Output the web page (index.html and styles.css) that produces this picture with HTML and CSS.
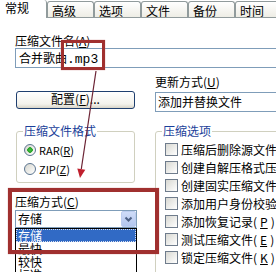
FILE: index.html
```html
<html>
<head>
    <meta charset="UTF-8">
    <meta name="viewport" content="width=device-width, initial-scale=1.0">
    <title>压缩文件名和参数</title>
    <link rel="stylesheet" href="styles.css">
</head>
<body>

<div class="screen">
    <div class="tabs">
        <div class="tab active">常规</div>
        <div class="tab">高级</div>
        <div class="tab">选项</div>
        <div class="tab">文件</div>
        <div class="tab">备份</div>
        <div class="tab">时间</div>
    </div>

    <div class="page">
        <div class="caption">压缩文件名(<u>A</u>)</div>
        <div class="textbox">合并歌曲<span class="ext">.mp3</span></div>

        <div class="columns">
            <div class="col">
                <button class="btn">配置(<u>F</u>)...</button>

                <fieldset class="group group-format">
                    <legend>压缩文件格式</legend>
                    <div class="radio-row"><span class="radio checked"></span><span class="latin">RAR(<u>R</u>)</span></div>
                    <div class="radio-row"><span class="radio"></span><span class="latin">ZIP(<u>Z</u>)</span></div>
                </fieldset>

                <div class="caption method">压缩方式(<u>C</u>)</div>
                <div class="combo">
                    <span>存储</span>
                    <span class="combo-btn">
                        <svg width="13" height="14" viewBox="0 0 13 14"><path d="M3.5 5.5 L6.5 8.5 L9.5 5.5" fill="none" stroke="#4d6185" stroke-width="2"/></svg>
                    </span>
                </div>
                <ul class="list">
                    <li class="sel">存储</li>
                    <li>最快</li>
                    <li>较快</li>
                    <li>标准</li>
                </ul>
            </div>

            <div class="col">
                <div class="caption update">更新方式(<u>U</u>)</div>
                <div class="combo wide">添加并替换文件</div>

                <fieldset class="group group-options">
                    <legend>压缩选项</legend>
                    <div class="check-row"><span class="check"></span>压缩后删除源文件</div>
                    <div class="check-row"><span class="check"></span>创建自解压格式压缩文件(<u>X</u>)</div>
                    <div class="check-row"><span class="check"></span>创建固实压缩文件(<u>S</u>)</div>
                    <div class="check-row"><span class="check"></span>添加用户身份校验信息(<u>T</u>)</div>
                    <div class="check-row"><span class="check"></span>添加恢复记录(<u>P</u>)</div>
                    <div class="check-row"><span class="check"></span>测试压缩文件(<u>E</u>)</div>
                    <div class="check-row"><span class="check"></span>锁定压缩文件(<u>K</u>)</div>
                </fieldset>
            </div>
        </div>
    </div>

    <!-- red marks drawn over the dialog -->
    <div class="mark mark-name"></div>
    <div class="mark mark-method"></div>
    <svg class="arrow" width="276" height="272" viewBox="0 0 276 272">
        <line x1="96" y1="71" x2="81.3" y2="169" stroke="#6b2233" stroke-width="1.2"/>
        <polygon points="80,178 85.3,169.7 77.3,168.5" fill="#c0202e"/>
    </svg>
</div>

</body>
</html>
```

FILE: styles.css
```css
* {
    margin: 0;
    padding: 0;
    box-sizing: border-box;
}
html, body {
    overflow: hidden;
}
body {
    width: 276px;
    height: 272px;
    background: #fff;
    font-family: "Noto Sans CJK SC", "Liberation Sans", sans-serif;
    font-size: 12px;
    color: #000;
}
.screen {
    position: relative;
    width: 340px;
    height: 272px;
}
.tabs {
    display: flex;
    align-items: flex-end;
    height: 18px;
    border-bottom: 1px solid #919b9c;
}
.tab {
    width: 47px;
    height: 16px;
    border: 1px solid #919b9c;
    border-bottom: 0;
    border-radius: 3px 3px 0 0;
    background: linear-gradient(#fff, #eeede5);
    padding: 3px 0 0 4px;
    line-height: 12px;
}
.tab.active {
    height: 18px;
    margin-bottom: -1px;
    border: 0;
    border-right: 1px solid #919b9c;
    background: #fff;
    padding: 1px 0 0 5px;
    line-height: 14px;
}
.page {
    padding: 16px 0 0 15px;
}
.caption {
    line-height: 14px;
    white-space: nowrap;
}
.textbox {
    height: 20px;
    border: 1px solid #7f9db9;
    padding-left: 3px;
    line-height: 17px;
    white-space: nowrap;
}
.ext {
    font-family: "Liberation Mono", monospace;
    font-size: 13px;
}
.columns {
    display: grid;
    grid-template-columns: 122px 1fr;
    column-gap: 18px;
}
.btn {
    display: block;
    width: 119px;
    height: 18px;
    margin: 23px 0 0 1px;
    border: 1px solid #1f3f6f;
    border-radius: 3px;
    background: linear-gradient(#fff, #f3f2ec 75%, #d8d4c8);
    font: inherit;
    line-height: 14px;
    padding-bottom: 2px;
}
.group {
    border: 1px solid #d0d0bf;
    border-radius: 3px;
    padding: 2px 0 4px 6px;
    min-width: 0;
}
.group legend {
    padding: 0 1px;
    line-height: 14px;
    color: #1b3f9a;
}
.group-format {
    margin: 15px 2px 0 1px;
}
.group-options {
    margin-top: 12px;
    padding-bottom: 8px;
}
.radio-row {
    display: flex;
    align-items: center;
    gap: 3px;
    height: 19px;
    padding-left: 1px;
}
.latin {
    font-size: 11px;
}
.radio {
    width: 12px;
    height: 12px;
    border-radius: 50%;
    border: 1px solid #5c7590;
    background: linear-gradient(135deg, #d6d6ce, #fff);
}
.radio.checked {
    background: radial-gradient(circle, #4bc04b 0, #21a121 2.5px, transparent 3px), linear-gradient(135deg, #d6d6ce, #fff);
}
.check-row {
    display: flex;
    align-items: center;
    gap: 3px;
    height: 18px;
    padding-left: 3px;
    white-space: nowrap;
}
.check {
    flex: none;
    width: 13px;
    height: 13px;
    border: 1px solid #6f7c8c;
    background: linear-gradient(135deg, #d8d8d2, #fff);
}
.method {
    margin-top: 12px;
}
.update {
    margin-top: 7px;
}
.combo {
    display: flex;
    justify-content: space-between;
    height: 18px;
    margin-top: 1px;
    border: 1px solid #7f9db9;
    padding-left: 2px;
    line-height: 16px;
    white-space: nowrap;
}
.combo.wide {
    height: 20px;
    margin-top: 3px;
    line-height: 18px;
}
.combo-btn {
    display: flex;
    align-items: center;
    justify-content: center;
    width: 15px;
    height: 16px;
    border: 1px solid #bccdf0;
    border-radius: 2px;
    background: linear-gradient(#cfdcf8, #b3c6ee);
}
.list {
    list-style: none;
    border: 1px solid #000;
    height: 60px;
}
.list li {
    line-height: 13px;
    padding-left: 2px;
}
.list .sel {
    background: #316ac5;
    color: #fff;
    outline: 1px dotted #d8e0f0;
    outline-offset: -1px;
}
.mark {
    position: absolute;
    border: 3px solid #a0302f;
    box-shadow: 0 0 1px #c98080;
}
.mark-name {
    left: 61px;
    top: 40px;
    width: 44px;
    height: 30px;
}
.mark-method {
    left: 8px;
    top: 188px;
    width: 151px;
    height: 66px;
    border-width: 4px;
}
.arrow {
    position: absolute;
    left: 0;
    top: 0;
}
```
